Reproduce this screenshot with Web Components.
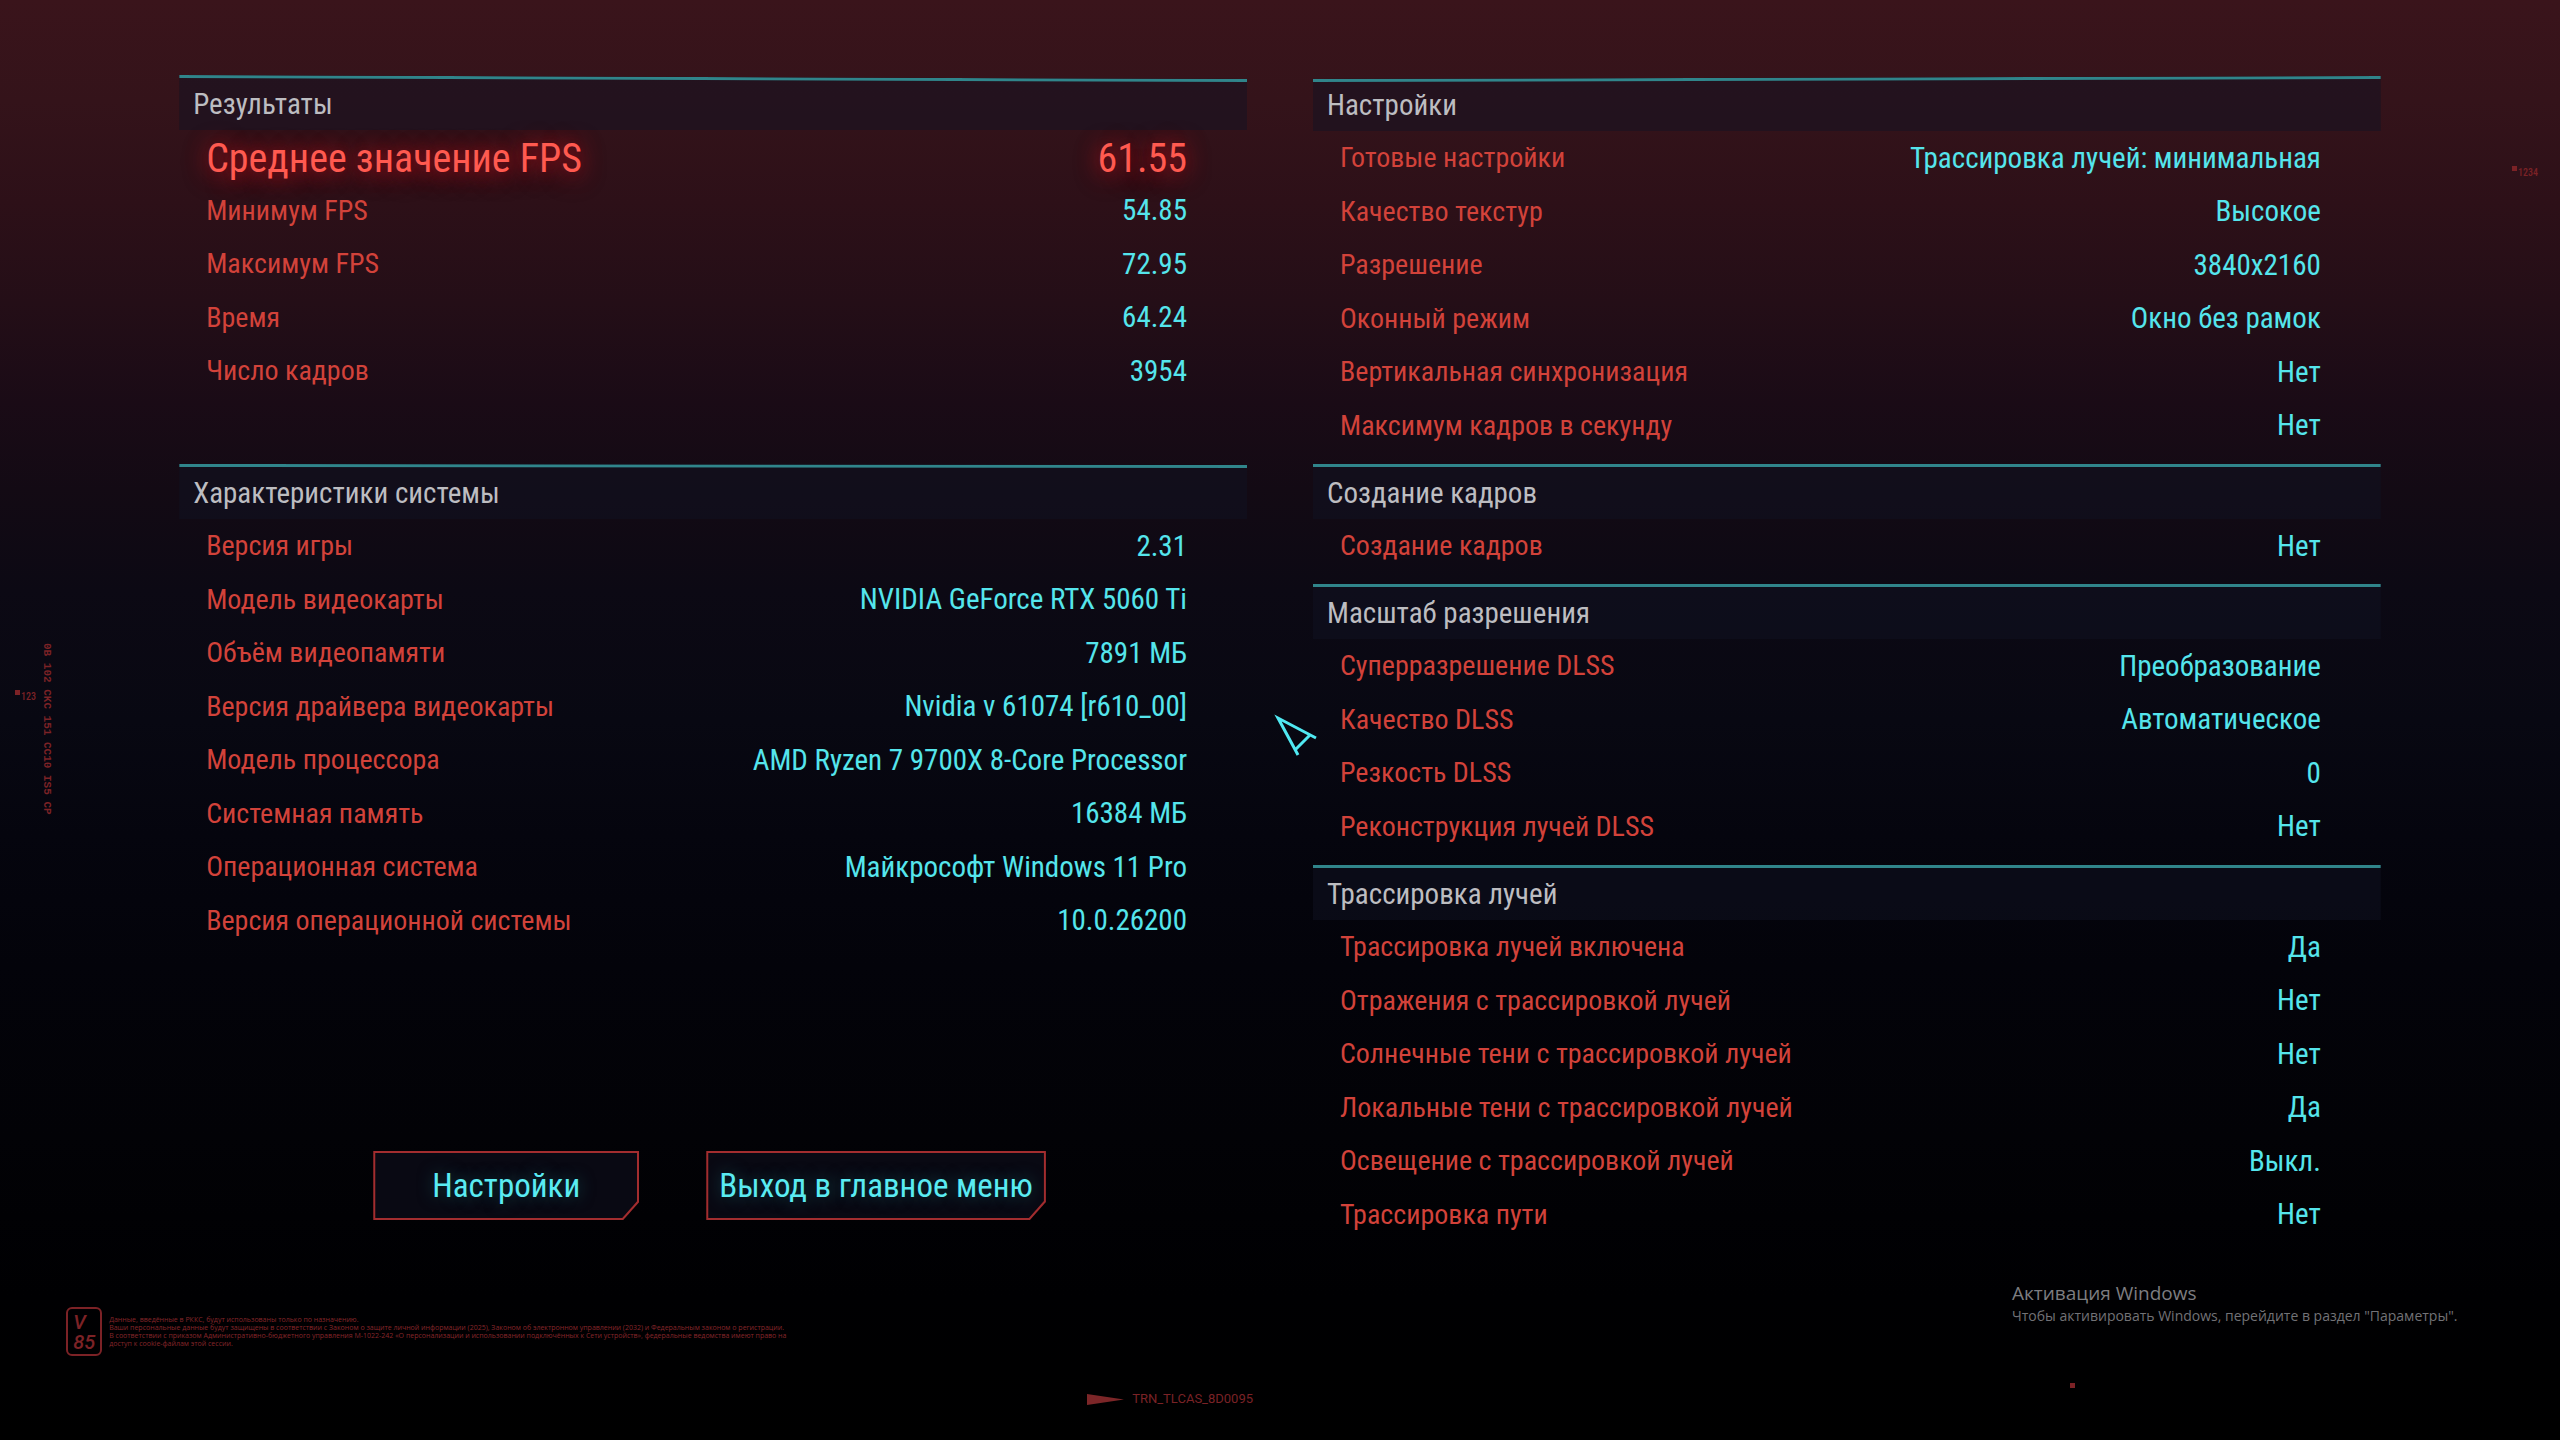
<!DOCTYPE html>
<html lang="ru">
<head>
<meta charset="utf-8">
<title>Результаты теста производительности</title>
<style>
  html { background: #000; }
  body { margin: 0; font-family: "Roboto Condensed", Roboto, "Liberation Sans", sans-serif; }
</style>
</head>
<body>
<benchmark-screen>
  <stat-section slot="results" heading="Результаты" skew="down">
    <stat-row label="Среднее значение FPS" big>61.55</stat-row>
    <stat-row label="Минимум FPS">54.85</stat-row>
    <stat-row label="Максимум FPS">72.95</stat-row>
    <stat-row label="Время">64.24</stat-row>
    <stat-row label="Число кадров">3954</stat-row>
  </stat-section>
  <stat-section slot="results" heading="Характеристики системы" skew="slight-down">
    <stat-row label="Версия игры">2.31</stat-row>
    <stat-row label="Модель видеокарты">NVIDIA GeForce RTX 5060 Ti</stat-row>
    <stat-row label="Объём видеопамяти">7891 МБ</stat-row>
    <stat-row label="Версия драйвера видеокарты">Nvidia v 61074 [r610_00]</stat-row>
    <stat-row label="Модель процессора">AMD Ryzen 7 9700X 8-Core Processor</stat-row>
    <stat-row label="Системная память">16384 МБ</stat-row>
    <stat-row label="Операционная система">Майкрософт Windows 11 Pro</stat-row>
    <stat-row label="Версия операционной системы">10.0.26200</stat-row>
  </stat-section>
  <cut-button slot="actions">Настройки</cut-button>
  <cut-button slot="actions">Выход в главное меню</cut-button>

  <stat-section slot="settings" heading="Настройки" skew="up">
    <stat-row label="Готовые настройки">Трассировка лучей: минимальная</stat-row>
    <stat-row label="Качество текстур">Высокое</stat-row>
    <stat-row label="Разрешение">3840x2160</stat-row>
    <stat-row label="Оконный режим">Окно без рамок</stat-row>
    <stat-row label="Вертикальная синхронизация">Нет</stat-row>
    <stat-row label="Максимум кадров в секунду">Нет</stat-row>
  </stat-section>
  <stat-section slot="settings" heading="Создание кадров">
    <stat-row label="Создание кадров">Нет</stat-row>
  </stat-section>
  <stat-section slot="settings" heading="Масштаб разрешения">
    <stat-row label="Суперразрешение DLSS">Преобразование</stat-row>
    <stat-row label="Качество DLSS">Автоматическое</stat-row>
    <stat-row label="Резкость DLSS">0</stat-row>
    <stat-row label="Реконструкция лучей DLSS">Нет</stat-row>
  </stat-section>
  <stat-section slot="settings" heading="Трассировка лучей">
    <stat-row label="Трассировка лучей включена">Да</stat-row>
    <stat-row label="Отражения с трассировкой лучей">Нет</stat-row>
    <stat-row label="Солнечные тени с трассировкой лучей">Нет</stat-row>
    <stat-row label="Локальные тени с трассировкой лучей">Да</stat-row>
    <stat-row label="Освещение с трассировкой лучей">Выкл.</stat-row>
    <stat-row label="Трассировка пути">Нет</stat-row>
  </stat-section>

  <legal-footer slot="footer"></legal-footer>
  <hud-overlay slot="overlay"></hud-overlay>
</benchmark-screen>

<script>
const define = (name, html, setup) => {
  const template = document.createElement('template');
  template.innerHTML = html;
  customElements.define(name, class extends HTMLElement {
    constructor() {
      super();
      this.attachShadow({ mode: 'open' }).append(template.content.cloneNode(true));
    }
    connectedCallback() { if (setup) setup(this, this.shadowRoot); }
  });
};

define('benchmark-screen', `
  <style>
    :host {
      display: block; position: relative; overflow: hidden; box-sizing: border-box;
      min-height: 100vh; padding: 75px 7% 0;
      background: linear-gradient(#3a141b 0, #34131a 7%, #2d1018 14%, #240e17 21%, #1a0b16 28%,
        #130a14 34%, #0c0914 41%, #080812 50%, #05050e 58%, #03030a 67%, #020206 79%, #000002 90%, #000 100%);
    }
    main { display: grid; grid-template-columns: 1fr 1fr; gap: 66px; }
    .left, .right { display: flex; flex-direction: column; }
    .left { gap: 55px; }
    .right { padding-top: 1px; }
    nav { display: flex; justify-content: center; gap: 67px; padding: 137px 7px 0 0; }
    footer { margin: 54px 0 0 -113px; }
  </style>
  <main>
    <div class="left"><slot name="results"></slot><nav><slot name="actions"></slot></nav></div>
    <div class="right"><slot name="settings"></slot></div>
  </main>
  <footer><slot name="footer"></slot></footer>
  <slot name="overlay"></slot>`);

define('stat-section', `
  <style>
    :host { display: block; --l: 0px; --r: 0px; padding-bottom: 12px; }
    :host([skew="down"]) { --r: 4px; }
    :host([skew="up"]) { --l: 3px; }
    :host([skew="slight-down"]) { --r: 1px; }
    header {
      display: flex; flex-direction: column; height: 55px;
      background: rgba(17, 18, 36, .48);
      clip-path: polygon(0 var(--l), 100% var(--r), 100% 100%, 0 100%);
    }
    .rule {
      flex: none; height: 8px; background: #30858b;
      clip-path: polygon(0 var(--l), 100% var(--r), 100% calc(var(--r) + 3px), 0 calc(var(--l) + 3px));
    }
    h2 {
      margin: 0; padding: 3px 14px 0; font-size: 29px; line-height: 36px; font-weight: 400; color: #bdbdc1;
    }
    ::slotted(:nth-child(even)) { --row-height: 54px; }
  </style>
  <header><div class="rule"></div><h2></h2></header>
  <slot></slot>`,
  (host, root) => { root.querySelector('h2').textContent = host.getAttribute('heading'); });

define('stat-row', `
  <style>
    :host {
      display: flex; justify-content: space-between; align-items: center; box-sizing: border-box;
      height: var(--row-height, 53px); padding: 0 60px 0 27px; white-space: nowrap;
    }
    .label { font-size: 28px; color: #d2423a; }
    .value { font-size: 29px; color: #55e5ec; }
    :host([big]) .label, :host([big]) .value {
      font-size: 40px; color: #ff5a50; text-shadow: 0 0 20px #a01018, 0 4px 24px #70101a;
    }
    :host([big]) { padding-top: 3px; }
  </style>
  <span class="label"></span><span class="value"><slot></slot></span>`,
  (host, root) => { root.querySelector('.label').textContent = host.getAttribute('label'); });

define('cut-button', `
  <style>
    :host { display: block; }
    button {
      display: block; min-width: 266px; height: 69px; padding: 0 13px; border: 0;
      font: 400 33px/69px "Roboto Condensed", Roboto, sans-serif; color: #5aebf2;
      text-shadow: 0 0 16px #12454c; cursor: pointer;
      background: #a32d2f;
      clip-path: polygon(0 0, 100% 0, 100% calc(100% - 18px), calc(100% - 16px) 100%, 0 100%);
      position: relative; z-index: 0;
    }
    button::before {
      content: ""; position: absolute; inset: 2px; z-index: -1; background: #090913;
      clip-path: polygon(0 0, 100% 0, 100% calc(100% - 17px), calc(100% - 15px) 100%, 0 100%);
    }
    button:hover::before { background: #141428; }
  </style>
  <button type="button"><slot></slot></button>`);

define('legal-footer', `
  <style>
    :host { display: block; color: #7c2226; }
    .legal { display: flex; align-items: center; gap: 7px; }
    .badge {
      display: flex; flex-direction: column; box-sizing: border-box; width: 36px; height: 49px; padding: 3px 0 0 5px;
      border: 2px solid; border-radius: 6px; font: italic 500 20px/20px Roboto, sans-serif;
    }
    p { margin: 0; font: 400 7px/8px "Open Sans", "Noto Sans", sans-serif; color: #86262a; white-space: nowrap; }
    .code { display: flex; align-items: center; gap: 8px; padding: 35px 0 0 1021px; font: 400 13px/16px Roboto, sans-serif; color: #7a2226; }
    svg { display: block; fill: #7c2628; }
  </style>
  <div class="legal">
    <div class="badge"><span>V</span><span>85</span></div>
    <p>Данные, введённые в РККС, будут использованы только по назначению.<br>
    Ваши персональные данные будут защищены в соответствии с Законом о защите личной информации (2025), Законом об электронном управлении (2032) и Федеральным законом о регистрации.<br>
    В соответствии с приказом Административно-бюджетного управления М-1022-242 «О персонализации и использовании подключённых к Сети устройств», федеральные ведомства имеют право на<br>
    доступ к cookie-файлам этой сессии.</p>
  </div>
  <div class="code">
    <svg width="37" height="11" viewBox="0 0 37 11" aria-hidden="true"><path d="M0 0 37 5.5 0 11Z"/></svg>
    <span>TRN_TLCAS_8D0095</span>
  </div>`);

define('hud-overlay', `
  <style>
    :host { position: absolute; inset: 0; pointer-events: none; color: #7c2226; font: 500 10px/10px "Roboto Condensed", Roboto, sans-serif; }
    .serial, .mark, .cursor, .activation { position: absolute; }
    .serial { left: 41px; top: 643px; writing-mode: vertical-rl; white-space: nowrap; font: 700 11px/12px "Liberation Mono", monospace; }
    .mark { display: flex; gap: 1px; }
    .mark::before { content: ""; width: 5px; height: 5px; background: #7c2226; }
    .mark span { padding-top: 2px; }
    .m1 { left: 15px; top: 690px; }
    .m2 { right: 22px; top: 166px; }
    .m3 { left: 2070px; top: 1383px; }
    .cursor { left: 1274px; top: 714px; fill: none; stroke: #50e9f2; stroke-width: 3; }
    .activation { left: 2012px; top: 1280px; color: #727276; font: 400 14px/20px "Open Sans", "Noto Sans", sans-serif; white-space: nowrap; }
    .activation strong { display: block; font-size: 19px; line-height: 26px; font-weight: 400; color: #7d7d80; }
  </style>
  <span class="serial">0B 102 CKC 151 CC10 IS5 CP</span>
  <div class="mark m1"><span>123</span></div>
  <div class="mark m2"><span>1234</span></div>
  <div class="mark m3"></div>
  <svg class="cursor" width="46" height="44" viewBox="0 0 46 44" aria-hidden="true"><path d="M42 24 4 4 24 41M36 21 21 36"/></svg>
  <div class="activation"><strong>Активация Windows</strong>Чтобы активировать Windows, перейдите в раздел "Параметры".</div>`);
</script>
</body>
</html>
